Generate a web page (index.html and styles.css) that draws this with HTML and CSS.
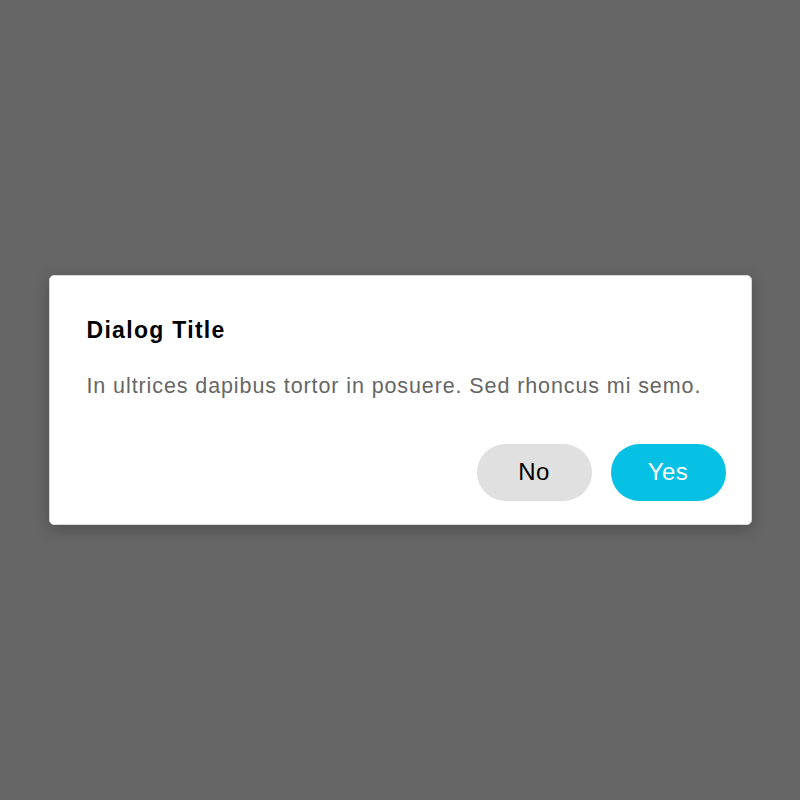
FILE: index.html
```html
<!DOCTYPE html>
<html>
<head>
<meta charset="utf-8">
<link rel="stylesheet" href="styles.css">
</head>
<body>
<div class="overlay">
  <div class="dialog">
    <h1 class="title">Dialog Title</h1>
    <p class="message">In ultrices dapibus tortor in posuere. Sed rhoncus mi semo.</p>
    <div class="actions">
      <button class="btn btn-no">No</button>
      <button class="btn btn-yes">Yes</button>
    </div>
  </div>
</div>
</body>
</html>
```

FILE: styles.css
```css
html, body {
  margin: 0;
  padding: 0;
  width: 800px;
  height: 800px;
  background: #666666;
  font-family: "Liberation Sans", Arial, sans-serif;
}
.overlay {
  width: 800px;
  height: 800px;
  display: flex;
  align-items: center;
  justify-content: center;
}
.dialog {
  box-sizing: border-box;
  width: 703px;
  height: 250px;
  margin-top: -1px;
  background: #ffffff;
  border: 1px solid #d8d8d8;
  border-radius: 5px;
  box-shadow: 0 4px 16px rgba(0, 0, 0, 0.25);
  padding: 40px 25px 23px 37px;
  display: flex;
  flex-direction: column;
}
.title {
  margin: 0;
  font-size: 23px;
  line-height: 28px;
  font-weight: bold;
  letter-spacing: 1.3px;
  color: #000000;
}
.message {
  margin: 28px 0 0 0;
  font-size: 21.5px;
  line-height: 28px;
  letter-spacing: 0.9px;
  color: #666666;
}
.actions {
  margin-top: auto;
  display: flex;
  justify-content: flex-end;
  gap: 19px;
}
.btn {
  width: 115px;
  height: 57px;
  border: none;
  border-radius: 29px;
  font-family: "Liberation Sans", Arial, sans-serif;
  font-size: 24px;
  letter-spacing: 0.5px;
  padding: 0;
}
.btn-no {
  background: #e0e0e0;
  color: #000000;
}
.btn-yes {
  background: #07c1e4;
  color: #ffffff;
}
```
